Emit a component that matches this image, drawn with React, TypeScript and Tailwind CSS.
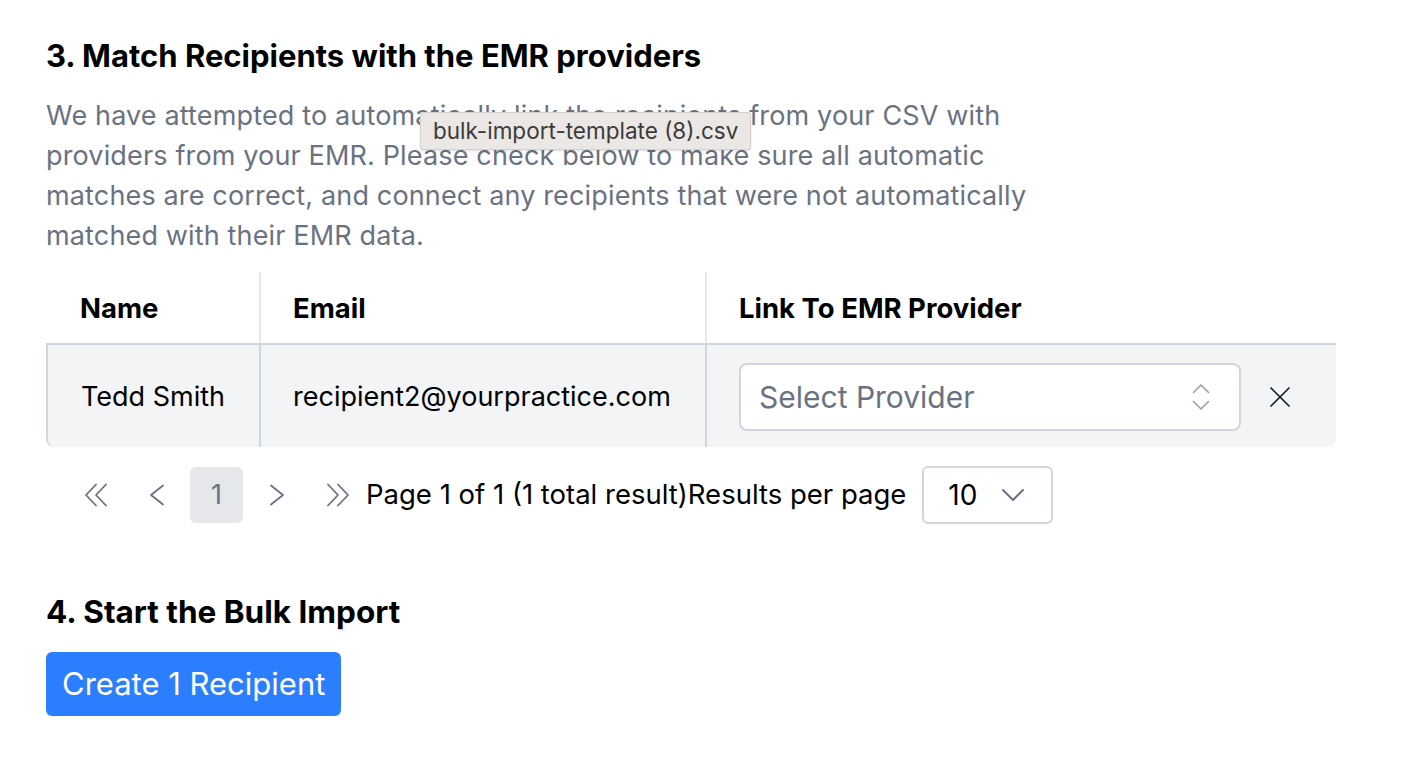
import { ChevronDown, ChevronsUpDown, X } from 'lucide-react';

const FONT = { fontFamily: 'Inter, "Noto Sans", "Liberation Sans", sans-serif' };

function PageButton({ children, active }: { children: React.ReactNode; active?: boolean }) {
  return (
    <button
      className={
        active
          ? 'w-[53px] h-[56px] flex items-center justify-center rounded-md bg-gray-200 text-gray-500 text-[27px]'
          : 'w-[53px] h-[56px] flex items-center justify-center text-gray-500'
      }
    >
      {children}
    </button>
  );
}

function DoubleChevron({ dir }: { dir: 'left' | 'right' }) {
  return (
    <svg width="28" height="24" viewBox="0 0 28 24" fill="none" stroke="currentColor" strokeWidth="1.8" strokeLinecap="round" strokeLinejoin="round">
      {dir === 'left' ? (
        <>
          <path d="M13 1.5 3 12l10 10.5" />
          <path d="M23 1.5 13 12l10 10.5" />
        </>
      ) : (
        <>
          <path d="M5 1.5 15 12 5 22.5" />
          <path d="M15 1.5 25 12 15 22.5" />
        </>
      )}
    </svg>
  );
}

function SingleChevron({ dir }: { dir: 'left' | 'right' }) {
  return (
    <svg width="16" height="22" viewBox="0 0 16 22" fill="none" stroke="currentColor" strokeWidth="1.8" strokeLinecap="round" strokeLinejoin="round">
      <path d={dir === 'left' ? 'M14 1.5 2 11l12 9.5' : 'M2 1.5 14 11 2 20.5'} />
    </svg>
  );
}

export default function App() {
  return (
    <div style={FONT} className="relative bg-white w-[1418px] h-[766px] pl-[46px] pt-[36px] text-black">
      {/* Step 3 */}
      <h2 className="text-[31px] leading-[40px] font-bold">3. Match Recipients with the EMR providers</h2>
      <p className="mt-[20px] w-[1010px] text-[27px] leading-[40px] text-gray-500 tracking-[0.15px]">
        We have attempted to automatically link the recipients from your CSV with providers from your EMR. Please
        check below to make sure all automatic matches are correct, and connect any recipients that were not
        automatically matched with their EMR data.
      </p>

      {/* Table */}
      <div className="mt-[16px] w-[1290px]">
        <div className="flex h-[73px] border-b-2 border-gray-300 text-[27.5px] font-bold">
          <div className="w-[213px] flex items-center pl-[34px] pt-[3px]">Name</div>
          <div className="w-[446px] flex items-center pl-[32px] pt-[3px] border-l-2 border-gray-200">Email</div>
          <div className="flex-1 flex items-center pl-[32px] pt-[3px] border-l-2 border-gray-200">
            Link To EMR Provider
          </div>
        </div>
        <div className="flex h-[102px] bg-gray-100 rounded-b-lg border-l-2 border-gray-300 text-[27px]">
          <div className="w-[211px] flex items-center pl-[33px] pt-[3px]">Tedd Smith</div>
          <div className="w-[446px] flex items-center pl-[32px] pt-[3px] border-l-2 border-gray-300">
            recipient2@yourpractice.com
          </div>
          <div className="flex-1 flex items-center pl-[32px] pt-[2px] border-l-2 border-gray-300">
            <div className="w-[502px] h-[68px] flex items-center justify-between pl-[18px] pr-[20px] bg-white border-2 border-gray-300 rounded-lg">
              <span className="text-[30px] text-gray-500">Select Provider</span>
              <ChevronsUpDown className="w-[36px] h-[36px] text-gray-400" strokeWidth={1.1} />
            </div>
            <X className="ml-[21px] w-[36px] h-[36px] text-gray-900" strokeWidth={1.1} />
          </div>
        </div>
      </div>

      {/* Pagination */}
      <div className="mt-[19px] flex items-center pl-[24px]">
        <div className="flex items-center gap-[7px]">
          <PageButton>
            <DoubleChevron dir="left" />
          </PageButton>
          <PageButton>
            <SingleChevron dir="left" />
          </PageButton>
          <PageButton active>1</PageButton>
          <PageButton>
            <SingleChevron dir="right" />
          </PageButton>
          <PageButton>
            <DoubleChevron dir="right" />
          </PageButton>
        </div>
        <span className="ml-[3px] text-[27.5px]">Page 1 of 1 (1 total result)Results per page</span>
        <div className="ml-[16px] w-[131px] h-[58px] flex items-center justify-between pl-[24px] pr-[18px] border-2 border-gray-300 rounded-md">
          <span className="text-[28px]">10</span>
          <ChevronDown className="w-[40px] h-[40px] text-gray-500" strokeWidth={1.2} />
        </div>
      </div>

      {/* Step 4 */}
      <h2 className="mt-[68px] text-[31.5px] leading-[40px] font-bold">4. Start the Bulk Import</h2>
      <button className="mt-[20px] h-[64px] px-[16px] rounded-md bg-blue-500 text-white text-[31px]">
        Create 1 Recipient
      </button>

      {/* native title tooltip */}
      <div className="absolute left-[420px] top-[112px] h-[38px] px-[12px] flex items-center bg-[#ebe7e4] border border-[#d4d0cd] rounded-[3px] shadow-sm text-[22.5px] text-[#3b3b3b]">
        bulk-import-template (8).csv
      </div>
    </div>
  );
}
